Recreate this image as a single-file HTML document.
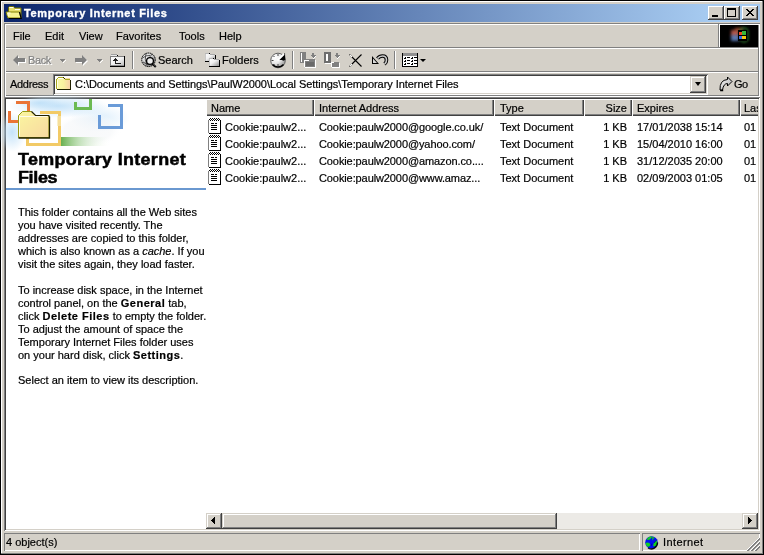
<!DOCTYPE html>
<html><head><meta charset="utf-8">
<style>
html,body{margin:0;padding:0;}
body{width:764px;height:555px;overflow:hidden;position:relative;background:#D4D0C8;font-family:"Liberation Sans",sans-serif;font-size:11px;color:#000;}
.a{position:absolute;}
.t{position:absolute;will-change:transform;-webkit-text-stroke:0.2px currentColor;font:11px/13px "Liberation Sans",sans-serif;white-space:pre;}
.b{font-weight:bold;}
.t b{letter-spacing:0.5px}
.r{background:#000;position:absolute;}
svg{position:absolute;overflow:visible;}
</style></head><body>
<!-- window frame -->
<div class="a" style="left:0;top:0;width:764px;height:1px;background:#000"></div>
<div class="a" style="left:0;top:0;width:1px;height:555px;background:#000"></div>
<div class="a" style="left:1px;top:1px;width:761px;height:1px;background:#fff"></div>
<div class="a" style="left:1px;top:1px;width:1px;height:553px;background:#fff"></div>
<div class="a" style="left:763px;top:0;width:1px;height:555px;background:#000"></div>
<div class="a" style="left:762px;top:1px;width:1px;height:553px;background:#808080"></div>
<div class="a" style="left:0;top:554px;width:764px;height:1px;background:#000"></div>
<div class="a" style="left:1px;top:553px;width:762px;height:1px;background:#808080"></div>

<!-- title bar -->
<div class="a" style="left:4px;top:4px;width:756px;height:18px;background:linear-gradient(to right,#0A246A,#A6CAF0 93%)"></div>
<svg style="left:5px;top:4px" width="17" height="16" viewBox="0 0 17 16">
  <path d="M3.5 3.5 l1 -1 h4 l1 1.5 h6.5 v9 h-12.5 z" fill="#E8E070" stroke="#707000"/>
  <path d="M4.5 3.5 h4 M10 5.5 h5" stroke="#fff"/>
  <path d="M1 8 h13.5 l1.5 6 h-13 z" fill="#F4F090" stroke="#808000" stroke-width="1"/>
  <path d="M2.5 9 h3 M2.5 11 h2" stroke="#fff"/>
  <path d="M14.5 8 l1.7 6.5 h-12.5" stroke="#000" stroke-width="1.2" fill="none"/>
</svg>
<div class="t b" style="left:24px;top:7px;color:#fff;letter-spacing:0.67px;-webkit-text-stroke:0.35px #fff">Temporary Internet Files</div>
<!-- title buttons -->
<div class="a btn" style="left:708px;top:6px;width:16px;height:14px"></div>
<div class="a btn" style="left:724px;top:6px;width:16px;height:14px"></div>
<div class="a btn" style="left:742px;top:6px;width:16px;height:14px"></div>
<style>
.btn{background:#D4D0C8;box-shadow:inset -1px -1px 0 #404040, inset 1px 1px 0 #fff, inset -2px -2px 0 #808080;}
.btn2{background:#D4D0C8;box-shadow:inset -1px -1px 0 #404040, inset 1px 1px 0 #D4D0C8, inset -2px -2px 0 #808080, inset 2px 2px 0 #fff;}
.sunk{box-shadow:inset 1px 1px 0 #808080, inset -1px -1px 0 #fff;}
</style>
<div class="a" style="left:712px;top:15px;width:6px;height:2px;background:#000"></div>
<div class="a" style="left:727px;top:8px;width:7px;height:6px;border:1px solid #000;border-top-width:2px"></div>
<svg style="left:746px;top:9px" width="8" height="7" viewBox="0 0 8 7" shape-rendering="crispEdges"><path d="M0 0h2v1h-2zM6 0h2v1h-2zM1 1h2v1h-2zM5 1h2v1h-2zM2 2h4v1h-4zM3 3h2v1h-2zM2 4h4v1h-4zM1 5h2v1h-2zM5 5h2v1h-2zM0 6h2v1h-2zM6 6h2v1h-2z" fill="#000"/></svg>

<!-- rebar etched border -->
<div class="a" style="left:4px;top:23px;width:756px;height:74px;box-shadow:inset 1px 1px 0 #808080, inset -1px -1px 0 #fff, inset 2px 2px 0 #fff, inset -2px -2px 0 #808080"></div>
<div class="a" style="left:6px;top:47px;width:752px;height:1px;background:#808080"></div>
<div class="a" style="left:6px;top:48px;width:752px;height:1px;background:#fff"></div>
<div class="a" style="left:6px;top:71px;width:752px;height:1px;background:#808080"></div>
<div class="a" style="left:6px;top:72px;width:752px;height:1px;background:#fff"></div>

<!-- menu -->
<div class="t" style="left:13px;top:30px">File</div>
<div class="t" style="left:45px;top:30px">Edit</div>
<div class="t" style="left:79px;top:30px">View</div>
<div class="t" style="left:116px;top:30px">Favorites</div>
<div class="t" style="left:179px;top:30px">Tools</div>
<div class="t" style="left:219px;top:30px">Help</div>
<!-- windows logo -->
<div class="a" style="left:718px;top:24px;width:1px;height:23px;background:#808080"></div>
<div class="a" style="left:719px;top:24px;width:1px;height:23px;background:#fff"></div>
<div class="a" style="left:720px;top:25px;width:38px;height:22px;background:#000;overflow:hidden">
  <div class="a" style="left:11px;top:5px;width:8px;height:6px;background:#F87868;filter:blur(1.6px);opacity:0.7"></div>
  <div class="a" style="left:11px;top:10px;width:8px;height:6px;background:#80A8F8;filter:blur(1.6px);opacity:0.7"></div>
  <div class="a" style="left:15px;top:3px;width:8px;height:3px;background:#E07040;filter:blur(1.5px);opacity:0.6"></div>
  <div class="a" style="left:19px;top:2px;width:10px;height:16px;border-radius:5px;border:2px solid #40A040;filter:blur(1.3px);opacity:0.55;box-sizing:border-box"></div>
  <div class="a" style="left:18px;top:5px;width:9px;height:11px;background:#000"></div>
  <div class="a" style="left:19px;top:7px;width:3px;height:3px;background:#F04A20"></div>
  <div class="a" style="left:22px;top:6px;width:4px;height:4px;background:#38B838"></div>
  <div class="a" style="left:19px;top:11px;width:3px;height:3px;background:#3A6CE0"></div>
  <div class="a" style="left:22px;top:11px;width:4px;height:3px;background:#F8C810"></div>
</div>

<!-- toolbar -->
<svg style="left:12px;top:54px" width="14" height="12" viewBox="0 0 14 12">
  <path d="M6 1 L1 6 L6 11 L6 8 L13 8 L13 4 L6 4 Z" fill="#fff" transform="translate(1,1)"/>
  <path d="M6 1 L1 6 L6 11 L6 8 L13 8 L13 4 L6 4 Z" fill="#808080"/>
</svg>
<div class="t" style="left:29px;top:55px;color:#fff;letter-spacing:-0.4px">Back</div>
<div class="t" style="left:28px;top:54px;color:#808080;letter-spacing:-0.4px">Back</div>
<svg style="left:60px;top:59px" width="6" height="4" viewBox="0 0 6 4" shape-rendering="crispEdges"><path d="M5 1h1v1h-1zM4 2h1v1h-1zM3 3h1v1h-1z" fill="#fff"/><path d="M0 0h5v1h-5zM1 1h3v1h-3zM2 2h1v1h-1z" fill="#808080"/></svg>
<svg style="left:74px;top:54px" width="14" height="12" viewBox="0 0 14 12">
  <path d="M8 1 L13 6 L8 11 L8 8 L1 8 L1 4 L8 4 Z" fill="#fff" transform="translate(1,1)"/>
  <path d="M8 1 L13 6 L8 11 L8 8 L1 8 L1 4 L8 4 Z" fill="#808080"/>
</svg>
<svg style="left:97px;top:59px" width="6" height="4" viewBox="0 0 6 4" shape-rendering="crispEdges"><path d="M5 1h1v1h-1zM4 2h1v1h-1zM3 3h1v1h-1z" fill="#fff"/><path d="M0 0h5v1h-5zM1 1h3v1h-3zM2 2h1v1h-1z" fill="#808080"/></svg>
<!-- up icon -->
<svg style="left:110px;top:54px" width="15" height="13" viewBox="0 0 15 13" shape-rendering="crispEdges">
  <defs><linearGradient id="upg" x1="0" x2="1" y1="0" y2="1"><stop offset="0" stop-color="#fff"/><stop offset="0.5" stop-color="#F0F0F0"/><stop offset="1" stop-color="#B0B0B0"/></linearGradient></defs>
  <rect x="1" y="0" width="6" height="2" fill="#E8E8E8"/>
  <rect x="1" y="0" width="6" height="1" fill="#A0A0A0"/>
  <rect x="7" y="1" width="1" height="1" fill="#000"/>
  <rect x="0" y="2" width="15" height="11" fill="url(#upg)"/>
  <rect x="0" y="2" width="14" height="1" fill="#808080"/>
  <rect x="0" y="2" width="1" height="10" fill="#808080"/>
  <rect x="14" y="2" width="1" height="11" fill="#000"/>
  <rect x="1" y="11" width="13" height="1" fill="#909090"/><rect x="0" y="12" width="15" height="1" fill="#000"/>
  <path d="M5 4h1v1h1v1h1v1h-2v2h5v1h-6v-3h-2v-1h1v-1h1z" fill="#202020"/>
</svg>
<div class="a" style="left:132px;top:51px;width:1px;height:18px;background:#808080"></div>
<div class="a" style="left:133px;top:51px;width:1px;height:18px;background:#fff"></div>
<!-- search icon -->
<svg style="left:141px;top:52px" width="17" height="17" viewBox="0 0 17 17">
  <defs><radialGradient id="sg" cx="0.35" cy="0.3" r="0.75"><stop offset="0" stop-color="#fff"/><stop offset="0.6" stop-color="#C8C8C8"/><stop offset="1" stop-color="#707070"/></radialGradient></defs>
  <circle cx="7.5" cy="7.8" r="6.8" fill="url(#sg)" stroke="#000" stroke-width="1" stroke-dasharray="1.6 0.6"/>
  <path d="M1.5 6 Q5 3 9 3.5 M2 10 Q5 12 8 12.5 M5 1.5 Q3 7 6 13.5 M11 2 Q8 5 9 7" stroke="#404040" stroke-width="0.9" fill="none"/>
  <circle cx="9" cy="9" r="3.4" fill="#EDEDED" stroke="#000" stroke-width="1.3"/>
  <path d="M11.3 11.5 L14.8 15" stroke="#000" stroke-width="2"/>
  <path d="M12.2 11.8 L14.5 14" stroke="#909090" stroke-width="0.8"/>
</svg>
<div class="t" style="left:158px;top:54px">Search</div>
<!-- folders icon -->
<svg style="left:204px;top:52px" width="17" height="16" viewBox="0 0 17 16" shape-rendering="crispEdges">
  <defs><linearGradient id="fg2" x1="0" x2="1" y1="0" y2="1"><stop offset="0" stop-color="#fff"/><stop offset="0.45" stop-color="#F0F0F0"/><stop offset="1" stop-color="#909090"/></linearGradient></defs>
  <rect x="1" y="1" width="4" height="1" fill="#B8B8B8"/><rect x="5" y="1" width="1" height="1" fill="#000"/>
  <rect x="1" y="2" width="10" height="7" fill="url(#fg2)"/>
  <rect x="6" y="2" width="5" height="1" fill="#A8A8A8"/>
  <rect x="1" y="2" width="1" height="7" fill="#C8C8C8"/>
  <rect x="11" y="3" width="1" height="6" fill="#000"/>
  <rect x="1" y="9" width="5" height="1" fill="#000"/>
  <rect x="5" y="6" width="4" height="1" fill="#B8B8B8"/><rect x="9" y="6" width="1" height="1" fill="#000"/>
  <rect x="5" y="7" width="10" height="7" fill="url(#fg2)"/>
  <rect x="10" y="7" width="5" height="1" fill="#A8A8A8"/>
  <rect x="5" y="7" width="1" height="7" fill="#C8C8C8"/>
  <rect x="15" y="8" width="1" height="7" fill="#000"/>
  <rect x="5" y="14" width="11" height="1" fill="#000"/>
</svg>
<div class="t" style="left:222px;top:54px">Folders</div>
<!-- history icon -->
<svg style="left:270px;top:52px" width="17" height="17" viewBox="0 0 17 17">
  <defs><radialGradient id="hg" cx="0.3" cy="0.3" r="0.8"><stop offset="0" stop-color="#fff"/><stop offset="0.5" stop-color="#E8E8E8"/><stop offset="1" stop-color="#909090"/></radialGradient></defs>
  <circle cx="8" cy="8.5" r="7.3" fill="url(#hg)" stroke="#606060" stroke-width="1"/>
  <path d="M2.5 12.5 A7.3 7.3 0 0 0 13.5 12.5" stroke="#000" stroke-width="1.6" fill="none"/>
  <path d="M8 8 L15 1 L15.3 8 Z" fill="#000"/>
  <path d="M7.5 8.5 L14 2" stroke="#fff" stroke-width="1.8"/>
  <path d="M8 2 v2 M8 12 v2 M1.5 8.5 h2 M12.5 8.5 h2 M3.5 4 l1 1 M3.5 13 l1 -1 M12 12 l1 1" stroke="#404040" stroke-width="1"/>
</svg>
<div class="a" style="left:292px;top:51px;width:1px;height:18px;background:#808080"></div>
<div class="a" style="left:293px;top:51px;width:1px;height:18px;background:#fff"></div>
<!-- move to / copy to (disabled) -->
<svg style="left:299px;top:52px" width="18" height="17" viewBox="0 0 18 17" shape-rendering="crispEdges">
  <rect x="1" y="0" width="6" height="11" fill="#808080"/>
  <rect x="2" y="1" width="1" height="9" fill="#fff"/>
  <rect x="5" y="7" width="11" height="8" fill="#808080"/>
  <rect x="6" y="8" width="4" height="1" fill="#fff"/>
  <rect x="5" y="8" width="1" height="7" fill="#fff"/>
  <rect x="6" y="15" width="11" height="1" fill="#fff"/>
  <rect x="16" y="8" width="1" height="8" fill="#fff"/>
  <rect x="7" y="10" width="8" height="4" fill="#6A6A6A"/>
  <path d="M13 1h2v2h2v1h-1v1h-1v1h-1v-1h-1v-1h-1v-1h1z" fill="#808080"/>
  <path d="M16 4h1v1h-1zM15 5h1v1h-1zM14 6h1v1h-1z" fill="#fff"/>
</svg>
<svg style="left:323px;top:52px" width="18" height="17" viewBox="0 0 18 17" shape-rendering="crispEdges">
  <rect x="1" y="0" width="7" height="11" fill="#6E6E6E"/>
  <rect x="3" y="2" width="2" height="7" fill="#fff"/>
  <rect x="2" y="11" width="6" height="1" fill="#fff"/>
  <rect x="8" y="10" width="8" height="5" fill="#808080"/>
  <rect x="8" y="10" width="3" height="1" fill="#fff"/>
  <rect x="8" y="11" width="1" height="4" fill="#fff"/>
  <rect x="9" y="15" width="8" height="1" fill="#fff"/>
  <rect x="16" y="11" width="1" height="5" fill="#fff"/>
  <path d="M13 1h2v2h2v1h-1v1h-1v1h-1v-1h-1v-1h-1v-1h1z" fill="#808080"/>
  <path d="M16 4h1v1h-1zM15 5h1v1h-1zM14 6h1v1h-1z" fill="#fff"/>
</svg>
<svg style="left:349px;top:54px" width="14" height="14" viewBox="0 0 14 14">
  <path d="M0.5 0.5 L12.5 12.5 M12.5 0.5 L0.5 12.5" stroke="#000" stroke-width="1.1"/>
  <path d="M0.8 0.8 L3 3 M0.8 12.2 L3 10" stroke="#fff" stroke-width="1.1"/>
</svg>
<svg style="left:371px;top:54px" width="17" height="12" viewBox="0 0 17 12">
  <path d="M6.5 4.5 Q8.5 2 11.5 2 Q15.5 2 15.5 6 Q15.5 8.5 13.5 10" stroke="#000" stroke-width="3.6" fill="none"/>
  <path d="M6.5 4.5 Q8.5 2 11.5 2 Q15.5 2 15.5 6 Q15.5 8.5 13.5 10" stroke="#C8C8C8" stroke-width="1.6" fill="none"/>
  <path d="M1 2 L1 10 L8 10 Z" fill="#000"/>
  <path d="M2 4.5 L2 9 L6 9 Z" fill="#D8D8D8"/>
</svg>
<div class="a" style="left:394px;top:51px;width:1px;height:18px;background:#808080"></div>
<div class="a" style="left:395px;top:51px;width:1px;height:18px;background:#fff"></div>
<!-- views icon -->
<svg style="left:402px;top:53px" width="16" height="14" viewBox="0 0 16 14" shape-rendering="crispEdges">
  <rect x="0" y="0" width="16" height="14" fill="#000"/>
  <rect x="1" y="0" width="14" height="3" fill="#909090"/>
  <rect x="1" y="3" width="14" height="10" fill="#fff"/>
  <g fill="#000"><path d="M3 4h1v2h-2v-1h1z"/><rect x="5" y="4" width="3" height="1"/><path d="M10 4h1v2h-2v-1h1z"/><rect x="12" y="4" width="3" height="1"/><path d="M3 7h1v2h-2v-1h1z"/><rect x="5" y="7" width="3" height="1"/><path d="M10 7h1v2h-2v-1h1z"/><rect x="12" y="7" width="3" height="1"/><path d="M3 10h1v2h-2v-1h1z"/><rect x="5" y="10" width="3" height="1"/><path d="M10 10h1v2h-2v-1h1z"/><rect x="12" y="10" width="3" height="1"/></g>
</svg>
<div class="a" style="left:420px;top:59px;width:0;height:0;border-left:3px solid transparent;border-right:3px solid transparent;border-top:3px solid #000"></div>

<!-- address bar -->
<div class="t" style="left:10px;top:78px;letter-spacing:-0.3px">Address</div>
<div class="a" style="left:53px;top:74px;width:655px;height:21px;background:#fff;box-shadow:inset 1px 1px 0 #808080, inset -1px -1px 0 #fff, inset 2px 2px 0 #404040, inset -2px -2px 0 #D4D0C8"></div>
<svg style="left:56px;top:77px" width="15" height="13" viewBox="0 0 15 13" shape-rendering="crispEdges">
  <defs><linearGradient id="afg" x1="0" x2="1" y1="0" y2="0"><stop offset="0" stop-color="#FAFAA8"/><stop offset="0.5" stop-color="#F8F0A0"/><stop offset="1" stop-color="#F8D0A8"/></linearGradient></defs>
  <rect x="1" y="1" width="13" height="11" fill="url(#afg)"/>
  <rect x="2" y="0" width="5" height="1" fill="#A8A820"/>
  <rect x="1" y="1" width="1" height="1" fill="#A8A820"/>
  <rect x="2" y="1" width="5" height="1" fill="#fff"/>
  <rect x="7" y="0" width="1" height="1" fill="#303000"/>
  <rect x="8" y="1" width="1" height="1" fill="#303000"/>
  <rect x="9" y="2" width="5" height="1" fill="#A8A820"/>
  <rect x="0" y="2" width="1" height="10" fill="#A8A820"/>
  <rect x="1" y="3" width="1" height="8" fill="#fff" opacity="0.7"/>
  <rect x="14" y="3" width="1" height="10" fill="#202000"/>
  <rect x="1" y="12" width="14" height="1" fill="#202000"/>
</svg>
<div class="t" style="left:75px;top:78px;letter-spacing:-0.055px">C:\Documents and Settings\PaulW2000\Local Settings\Temporary Internet Files</div>
<div class="a btn2" style="left:690px;top:76px;width:16px;height:17px"></div>
<div class="a" style="left:695px;top:82px;width:0;height:0;border-left:3.5px solid transparent;border-right:3.5px solid transparent;border-top:4px solid #000"></div>
<svg style="left:718px;top:76px" width="16" height="16" viewBox="0 0 16 16">
  <defs><linearGradient id="gog" x1="0" x2="1" y1="0" y2="1"><stop offset="0" stop-color="#fff"/><stop offset="1" stop-color="#A8A8A8"/></linearGradient></defs>
  <path d="M9.5 1 L14 5.5 L9.5 10 L9.5 7.5 Q5.5 7.5 4.5 14 L2 14 Q1.5 4 9.5 3.5 Z" fill="url(#gog)" stroke="#000" stroke-width="1"/>
  <path d="M2.2 14.5 h3" stroke="#000" stroke-width="1.5"/>
</svg>
<div class="t" style="left:734px;top:78px;letter-spacing:-0.5px">Go</div>

<!-- content client edge -->
<div class="a" style="left:4px;top:97px;width:756px;height:434px;background:#fff;box-shadow:inset 1px 1px 0 #808080, inset -1px -1px 0 #fff, inset 2px 2px 0 #404040, inset -2px -2px 0 #D4D0C8"></div>

<!-- left panel banner -->
<svg style="left:6px;top:99px" width="200" height="52" viewBox="6 99 200 52">
  <defs>
    <radialGradient id="sky1" cx="0.5" cy="0.5" r="0.5">
      <stop offset="0" stop-color="#BFE0F8" stop-opacity="0.9"/>
      <stop offset="1" stop-color="#BFE0F8" stop-opacity="0"/>
    </radialGradient>
    <radialGradient id="cloud" cx="0.5" cy="0.5" r="0.5">
      <stop offset="0" stop-color="#F4F6F8" stop-opacity="1"/>
      <stop offset="0.7" stop-color="#F4F6F8" stop-opacity="0.8"/>
      <stop offset="1" stop-color="#fff" stop-opacity="0"/>
    </radialGradient>
    <linearGradient id="grn" x1="0" x2="1" y1="0" y2="0">
      <stop offset="0" stop-color="#68B050"/>
      <stop offset="0.35" stop-color="#A8D49A" stop-opacity="0.7"/>
      <stop offset="1" stop-color="#fff" stop-opacity="0"/>
    </linearGradient>
    <linearGradient id="fold" x1="0" x2="1" y1="0" y2="1">
      <stop offset="0" stop-color="#FAF6A0"/>
      <stop offset="1" stop-color="#F8D8A0"/>
    </linearGradient>
  </defs>
  <ellipse cx="58" cy="106" rx="50" ry="12" fill="url(#sky1)"/><ellipse cx="40" cy="103" rx="22" ry="6" fill="url(#sky1)"/>
  <ellipse cx="12" cy="132" rx="14" ry="20" fill="url(#sky1)"/>
  <ellipse cx="100" cy="118" rx="30" ry="14" fill="url(#sky1)" opacity="0.6"/>
  <ellipse cx="88" cy="130" rx="34" ry="17" fill="url(#cloud)" opacity="0.7"/>
  <!-- orange -->
  <path d="M16 101 h14 v10 h-3 v-7 h-11 z" fill="#EA7436"/>
  <path d="M8 111 h3 v9 h8 v3 h-11 z" fill="#EA7436"/>
  <!-- gold -->
  <path d="M40 111 h21 v35 h-35 v-9 h3 v6 h29 v-29 h-18 z" fill="#F2CA66"/>
  <rect x="57" y="116" width="4" height="10" fill="#F8E8B0" opacity="0.7"/>
  <!-- green bracket -->
  <path d="M89 99 h3 v11 h-18 v-8 h3 v5 h12 z" fill="#6CBA52"/>
  <!-- blue -->
  <path d="M108 104 h15 v25 h-25 v-14 h3 v11 h19 v-19 h-12 z" fill="#6A9BD8"/>
  <!-- green bar -->
  <rect x="61" y="137" width="50" height="9" fill="url(#grn)"/>
  <!-- folder -->
  <path d="M18.5 137.5 v-22 l4 -4 h9 l4 4 h13.5 v22 z" fill="url(#fold)" stroke="#9A9A10" stroke-width="1"/>
  <path d="M19.5 136 v-19.5 h28" stroke="#fff" stroke-width="1" fill="none" opacity="0.8"/>
  <path d="M31.5 111.5 l4 4 h13 l1 1" stroke="#202000" stroke-width="1.2" fill="none"/>
  <path d="M49.5 116.5 v21.5 h-31" stroke="#202000" stroke-width="1.3" fill="none"/>
</svg>
<div class="t b" style="left:18px;top:151px;font-size:16px;line-height:17px;letter-spacing:0.3px;-webkit-text-stroke:0.5px #000;transform:scaleX(1.12);transform-origin:0 0">Temporary Internet</div>
<div class="t b" style="left:18px;top:169px;font-size:16px;line-height:17px;letter-spacing:-0.3px;-webkit-text-stroke:0.5px #000;transform:scaleX(1.12);transform-origin:0 0">Files</div>
<div class="a" style="left:6px;top:188px;width:200px;height:2px;background:#6A98D0"></div>

<!-- left panel text -->
<div class="t" style="left:18px;top:206px">This folder contains all the Web sites</div>
<div class="t" style="left:18px;top:219px">you have visited recently. The</div>
<div class="t" style="left:18px;top:232px">addresses are copied to this folder,</div>
<div class="t" style="left:18px;top:245px">which is also known as a <i>cache</i>. If you</div>
<div class="t" style="left:18px;top:258px">visit the sites again, they load faster.</div>
<div class="t" style="left:18px;top:284px">To increase disk space, in the Internet</div>
<div class="t" style="left:18px;top:297px">control panel, on the <b>General</b> tab,</div>
<div class="t" style="left:18px;top:310px">click <b>Delete Files</b> to empty the folder.</div>
<div class="t" style="left:18px;top:323px">To adjust the amount of space the</div>
<div class="t" style="left:18px;top:336px">Temporary Internet Files folder uses</div>
<div class="t" style="left:18px;top:349px">on your hard disk, click <b>Settings</b>.</div>
<div class="t" style="left:18px;top:374px">Select an item to view its description.</div>

<div class="a" style="left:0;top:0;width:764px;height:555px;clip-path:inset(99px 6px 42px 206px)">
<!-- list header -->
<div class="a hd" style="left:206px;top:99px;width:108px;height:17px"></div>
<div class="a hd" style="left:314px;top:99px;width:180px;height:17px"></div>
<div class="a hd" style="left:494px;top:99px;width:90px;height:17px"></div>
<div class="a hd" style="left:584px;top:99px;width:48px;height:17px"></div>
<div class="a hd" style="left:632px;top:99px;width:108px;height:17px"></div>
<div class="a hd" style="left:740px;top:99px;width:60px;height:17px"></div>
<style>.hd{background:#D4D0C8;box-shadow:inset 1px 1px 0 #fff, inset -1px -1px 0 #404040, inset -2px -2px 0 #808080;}</style>
<div class="a" style="left:758px;top:99px;width:6px;height:432px;background:transparent"></div>
<div class="t" style="left:211px;top:102px">Name</div>
<div class="t" style="left:319px;top:102px">Internet Address</div>
<div class="t" style="left:500px;top:102px">Type</div>
<div class="t" style="left:585px;top:102px;width:42px;text-align:right">Size</div>
<div class="t" style="left:637px;top:102px">Expires</div>
<div class="t" style="left:744px;top:102px">Last</div>

<!-- rows -->
<div id="rows"></div>
<div class="t" style="left:225px;top:121px">Cookie:paulw2...</div>
<div class="t" style="left:319px;top:121px;letter-spacing:-0.1px">Cookie:paulw2000@google.co.uk/</div>
<div class="t" style="left:500px;top:121px">Text Document</div>
<div class="t" style="left:585px;top:121px;width:42px;text-align:right">1 KB</div>
<div class="t" style="left:637px;top:121px">17/01/2038 15:14</div>
<div class="t" style="left:744px;top:121px">01</div>

<div class="t" style="left:225px;top:138px">Cookie:paulw2...</div>
<div class="t" style="left:319px;top:138px;letter-spacing:-0.1px">Cookie:paulw2000@yahoo.com/</div>
<div class="t" style="left:500px;top:138px">Text Document</div>
<div class="t" style="left:585px;top:138px;width:42px;text-align:right">1 KB</div>
<div class="t" style="left:637px;top:138px">15/04/2010 16:00</div>
<div class="t" style="left:744px;top:138px">01</div>

<div class="t" style="left:225px;top:155px">Cookie:paulw2...</div>
<div class="t" style="left:319px;top:155px;letter-spacing:-0.1px">Cookie:paulw2000@amazon.co....</div>
<div class="t" style="left:500px;top:155px">Text Document</div>
<div class="t" style="left:585px;top:155px;width:42px;text-align:right">1 KB</div>
<div class="t" style="left:637px;top:155px">31/12/2035 20:00</div>
<div class="t" style="left:744px;top:155px">01</div>

<div class="t" style="left:225px;top:172px">Cookie:paulw2...</div>
<div class="t" style="left:319px;top:172px;letter-spacing:-0.1px">Cookie:paulw2000@www.amaz...</div>
<div class="t" style="left:500px;top:172px">Text Document</div>
<div class="t" style="left:585px;top:172px;width:42px;text-align:right">1 KB</div>
<div class="t" style="left:637px;top:172px">02/09/2003 01:05</div>
<div class="t" style="left:744px;top:172px">01</div>

<!-- file icons -->
<svg style="left:206px;top:116px" width="18" height="18" viewBox="0 0 18 18"><use href="#doc"/></svg>
<svg style="left:206px;top:133px" width="18" height="18" viewBox="0 0 18 18"><use href="#doc"/></svg>
<svg style="left:206px;top:150px" width="18" height="18" viewBox="0 0 18 18"><use href="#doc"/></svg>
<svg style="left:206px;top:167px" width="18" height="18" viewBox="0 0 18 18"><use href="#doc"/></svg>
<svg width="0" height="0" style="position:absolute">
  <defs>
    <g id="doc" shape-rendering="crispEdges">
      <rect x="3" y="3" width="11" height="14" fill="#fff"/>
      <rect x="2" y="4" width="1" height="13" fill="#808080"/>
      <rect x="14" y="4" width="1" height="14" fill="#000"/>
      <rect x="3" y="17" width="12" height="1" fill="#000"/>
      <path d="M4 2h1v1h-1zM4 4h1v1h-1zM6 2h1v1h-1zM6 4h1v1h-1zM8 2h1v1h-1zM8 4h1v1h-1zM10 2h1v1h-1zM10 4h1v1h-1zM12 2h1v1h-1zM12 4h1v1h-1zM3 3h1v1h-1zM5 3h1v1h-1zM7 3h1v1h-1zM9 3h1v1h-1zM11 3h1v1h-1zM13 3h1v1h-1z" fill="#000"/>
      <path d="M5 7h3v1h-3zM9 7h2v1h-2zM5 9h6v1h-6zM5 11h6v1h-6zM5 13h6v1h-6z" fill="#000"/>
    </g>
  </defs>
</svg>

</div>
<!-- horizontal scrollbar -->
<div class="a" style="left:206px;top:513px;width:552px;height:16px;background:#ECEAE6"></div>
<div class="a btn2" style="left:206px;top:513px;width:16px;height:16px"></div>
<svg style="left:211px;top:517px" width="4" height="7" viewBox="0 0 4 7" shape-rendering="crispEdges"><path d="M3 0h1v7h-1zM2 1h1v5h-1zM1 2h1v3h-1zM0 3h1v1h-1z" fill="#000"/></svg>
<div class="a btn2" style="left:222px;top:513px;width:335px;height:16px"></div>
<div class="a btn2" style="left:742px;top:513px;width:16px;height:16px"></div>
<svg style="left:748px;top:517px" width="4" height="7" viewBox="0 0 4 7" shape-rendering="crispEdges"><path d="M0 0h1v7h-1zM1 1h1v5h-1zM2 2h1v3h-1zM3 3h1v1h-1z" fill="#000"/></svg>

<!-- status bar -->
<div class="a sunk" style="left:4px;top:533px;width:636px;height:18px"></div>
<div class="t" style="left:6px;top:536px">4 object(s)</div>
<div class="a sunk" style="left:642px;top:533px;width:118px;height:18px"></div>
<svg style="left:645px;top:536px" width="13" height="13" viewBox="0 0 13 13">
  <circle cx="6.5" cy="6.5" r="6.3" fill="#0010F0"/>
  <path d="M1.5 3.5 q2 -3 4 -3 h2 l-2.5 3 l-2 0.5 z" fill="#10D020"/>
  <path d="M7 0.8 l3 0.5 l-3 3.5 z" fill="#10C020" opacity="0.8"/>
  <path d="M0.5 7 q2 -1 4 0 l1 2.5 l-2.5 1.5 q-2 -1 -2.5 -4 z" fill="#10D020"/>
  <path d="M11.5 4 q1.5 2 0.5 5 q-2 2 -4 1 q0 -3 3.5 -6 z" fill="#10D020"/>
  <path d="M6 10 l1 -2.5 M9 7 l3 -3.5" stroke="#0000A0" stroke-width="0.8"/>
  <path d="M12.5 6.5 A6.3 6.3 0 0 1 3 12" stroke="#000" stroke-width="1.4" fill="none" opacity="0.9"/>
</svg>
<div class="t" style="left:663px;top:536px;letter-spacing:0.4px">Internet</div>
<svg style="left:747px;top:538px" width="13" height="13" viewBox="0 0 13 13" shape-rendering="crispEdges"><path d="M11 0h1v1h-1zM12 0h1v1h-1zM10 1h1v1h-1zM11 1h1v1h-1zM12 1h1v1h-1zM9 2h1v1h-1zM10 2h1v1h-1zM11 2h1v1h-1zM12 2h1v1h-1zM8 3h1v1h-1zM9 3h1v1h-1zM10 3h1v1h-1zM11 3h1v1h-1zM12 3h1v1h-1zM7 4h1v1h-1zM8 4h1v1h-1zM9 4h1v1h-1zM10 4h1v1h-1zM11 4h1v1h-1zM12 4h1v1h-1zM6 5h1v1h-1zM7 5h1v1h-1zM8 5h1v1h-1zM9 5h1v1h-1zM10 5h1v1h-1zM11 5h1v1h-1zM12 5h1v1h-1zM5 6h1v1h-1zM6 6h1v1h-1zM7 6h1v1h-1zM8 6h1v1h-1zM9 6h1v1h-1zM10 6h1v1h-1zM11 6h1v1h-1zM12 6h1v1h-1zM4 7h1v1h-1zM5 7h1v1h-1zM6 7h1v1h-1zM7 7h1v1h-1zM8 7h1v1h-1zM9 7h1v1h-1zM10 7h1v1h-1zM11 7h1v1h-1zM12 7h1v1h-1zM3 8h1v1h-1zM4 8h1v1h-1zM5 8h1v1h-1zM6 8h1v1h-1zM7 8h1v1h-1zM8 8h1v1h-1zM9 8h1v1h-1zM10 8h1v1h-1zM11 8h1v1h-1zM12 8h1v1h-1zM2 9h1v1h-1zM3 9h1v1h-1zM4 9h1v1h-1zM5 9h1v1h-1zM6 9h1v1h-1zM7 9h1v1h-1zM8 9h1v1h-1zM9 9h1v1h-1zM10 9h1v1h-1zM11 9h1v1h-1zM12 9h1v1h-1zM1 10h1v1h-1zM2 10h1v1h-1zM3 10h1v1h-1zM4 10h1v1h-1zM5 10h1v1h-1zM6 10h1v1h-1zM7 10h1v1h-1zM8 10h1v1h-1zM9 10h1v1h-1zM10 10h1v1h-1zM11 10h1v1h-1zM12 10h1v1h-1zM0 11h1v1h-1zM1 11h1v1h-1zM2 11h1v1h-1zM3 11h1v1h-1zM4 11h1v1h-1zM5 11h1v1h-1zM6 11h1v1h-1zM7 11h1v1h-1zM8 11h1v1h-1zM9 11h1v1h-1zM10 11h1v1h-1zM11 11h1v1h-1zM12 11h1v1h-1zM0 12h1v1h-1zM1 12h1v1h-1zM2 12h1v1h-1zM3 12h1v1h-1zM4 12h1v1h-1zM5 12h1v1h-1zM6 12h1v1h-1zM7 12h1v1h-1zM8 12h1v1h-1zM9 12h1v1h-1zM10 12h1v1h-1zM11 12h1v1h-1zM12 12h1v1h-1z" fill="#D4D0C8"/><path d="M11 0h1v1h-1zM10 1h1v1h-1zM9 2h1v1h-1zM8 3h1v1h-1zM12 3h1v1h-1zM7 4h1v1h-1zM11 4h1v1h-1zM6 5h1v1h-1zM10 5h1v1h-1zM5 6h1v1h-1zM9 6h1v1h-1zM4 7h1v1h-1zM8 7h1v1h-1zM12 7h1v1h-1zM3 8h1v1h-1zM7 8h1v1h-1zM11 8h1v1h-1zM2 9h1v1h-1zM6 9h1v1h-1zM10 9h1v1h-1zM1 10h1v1h-1zM5 10h1v1h-1zM9 10h1v1h-1zM0 11h1v1h-1zM4 11h1v1h-1zM8 11h1v1h-1zM3 12h1v1h-1zM7 12h1v1h-1z" fill="#fff"/><path d="M12 0h1v1h-1zM11 1h1v1h-1zM12 1h1v1h-1zM10 2h1v1h-1zM11 2h1v1h-1zM9 3h1v1h-1zM10 3h1v1h-1zM8 4h1v1h-1zM9 4h1v1h-1zM12 4h1v1h-1zM7 5h1v1h-1zM8 5h1v1h-1zM11 5h1v1h-1zM12 5h1v1h-1zM6 6h1v1h-1zM7 6h1v1h-1zM10 6h1v1h-1zM11 6h1v1h-1zM5 7h1v1h-1zM6 7h1v1h-1zM9 7h1v1h-1zM10 7h1v1h-1zM4 8h1v1h-1zM5 8h1v1h-1zM8 8h1v1h-1zM9 8h1v1h-1zM12 8h1v1h-1zM3 9h1v1h-1zM4 9h1v1h-1zM7 9h1v1h-1zM8 9h1v1h-1zM11 9h1v1h-1zM12 9h1v1h-1zM2 10h1v1h-1zM3 10h1v1h-1zM6 10h1v1h-1zM7 10h1v1h-1zM10 10h1v1h-1zM11 10h1v1h-1zM1 11h1v1h-1zM2 11h1v1h-1zM5 11h1v1h-1zM6 11h1v1h-1zM9 11h1v1h-1zM10 11h1v1h-1zM0 12h1v1h-1zM1 12h1v1h-1zM4 12h1v1h-1zM5 12h1v1h-1zM8 12h1v1h-1zM9 12h1v1h-1z" fill="#808080"/></svg>
</body></html>
